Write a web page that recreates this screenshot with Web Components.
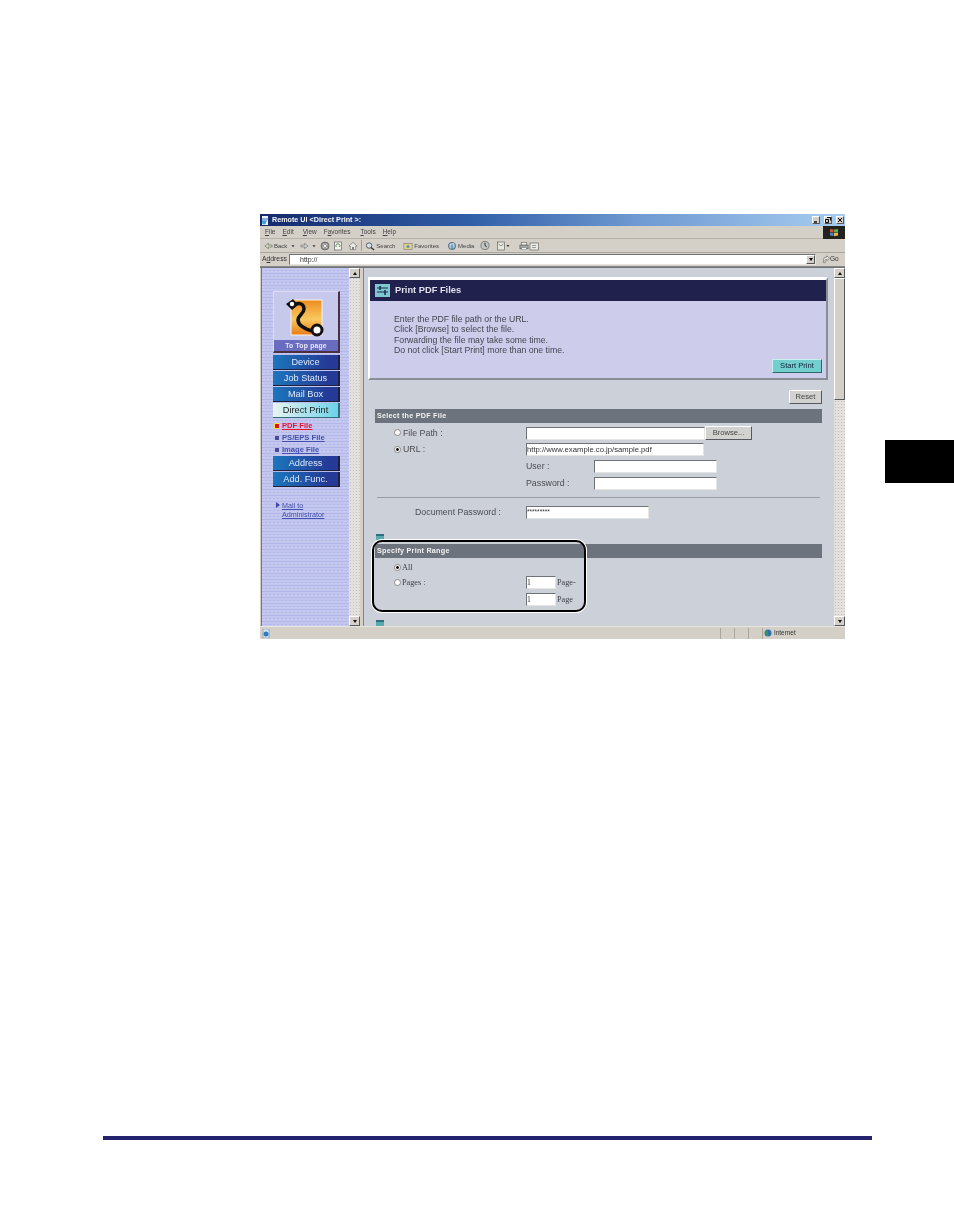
<!DOCTYPE html>
<html lang="en">
<head>
<meta charset="utf-8">
<title>Remote UI Direct Print</title>
<style>
  html, body { margin: 0; background: #fff; }
  body { font-family: "Liberation Sans", Arial, sans-serif; }
</style>
</head>
<body>
<doc-page>
  <ie-window>
    <nav-sidebar slot="side"></nav-sidebar>
    <print-panel slot="main"></print-panel>
  </ie-window>
</doc-page>

<script>
// plain win2k style box edges, used all over
const RAISED = 'border:1px solid;border-color:#fff #55585c #55585c #fff;';
const SUNKEN = 'border:1px solid;border-color:#6f7276 #e4e4e0 #e4e4e0 #6f7276;';

class DocPage extends HTMLElement {
    constructor() {
        super();
        this.attachShadow({ mode: 'open' });
        this.shadowRoot.innerHTML = `
            <style>
                :host { display: block; width: 954px; height: 1227px; overflow: hidden; background: #fff; }
                .top { display: flex; padding: 214px 0 0 260px; }
                .tab { width: 69px; height: 43px; margin: 226px 0 0 40px; background: #000; flex: none; }
                .rule { width: 769px; height: 4px; margin: 497px 0 0 103px; background: #24246e; }
            </style>
            <div class="top"><slot></slot><div class="tab"></div></div>
            <div class="rule"></div>
        `;
    }
}

class IeWindow extends HTMLElement {
    constructor() {
        super();
        this.attachShadow({ mode: 'open' });
        this.shadowRoot.innerHTML = `
            <style>
                :host { display: block; flex: none; width: 585px; height: 425px; background: #d4d0c8; color: #333;
                        font: 7px/1 "Liberation Sans", Arial, sans-serif; filter: blur(.45px); }
                svg { display: block; flex: none; }
                .title { height: 12px; display: flex; align-items: center; padding: 0 1px;
                         background: linear-gradient(90deg, #14296c 0%, #2f5da6 35%, #6f9ad2 65%, #a6cdf0 100%);
                         color: #f4f4fa; font-size: 7.2px; font-weight: bold; gap: 2px; }
                .title span { flex: 1; }
                .ctl { width: 8px; height: 8px; background: #d4d0c8; margin-left: 2px; ${RAISED} box-sizing: border-box; }
                .menu { height: 13px; display: flex; align-items: center; border-bottom: 1px solid #b5b2aa; box-sizing: border-box; }
                .menu .items { flex: 1; display: flex; padding-left: 5px; font-size: 6.5px; color: #444; }
                .flag { width: 22px; height: 13px; background: #24221f; display: flex; align-items: center; justify-content: center; }
                .tools { height: 14px; display: flex; align-items: center; padding-left: 4px; font-size: 6px; color: #444;
                         border-bottom: 1px solid #a9a69e; box-sizing: border-box; }
                .tools i { font-style: normal; display: flex; align-items: center; gap: 1px; }
                .sep { width: 1px; height: 11px; background: #a09d95; }
                .addr { height: 14px; display: flex; align-items: center; border-bottom: 1px solid #888; box-sizing: border-box; }
                .addr b { font-weight: normal; width: 29px; padding-left: 2px; box-sizing: border-box; font-size: 6.8px; }
                .url { width: 527px; height: 11px; background: #fff; ${SUNKEN} box-sizing: border-box; display: flex; align-items: center;
                       padding-left: 10px; justify-content: space-between; }
                .drop { width: 9px; height: 9px; background: #d4d0c8; ${RAISED} box-sizing: border-box; display: flex; align-items: center; justify-content: center; }
                .drop::after { content: ""; border: 2px solid transparent; border-top: 3px solid #000; border-bottom: 0; }
                .go { display: flex; align-items: center; gap: 0; margin-left: 6px; font-size: 6.5px; }
                .body { height: 359px; display: flex; padding-left: 1px; border-top: 1px solid #6f7276; box-sizing: border-box; }
                .sidewrap { width: 99px; flex: none; display: flex; border-left: 1px solid #777; box-sizing: border-box; }
                .gap { width: 3px; flex: none; background: #d4d0c8; border-right: 1px solid #808388; }
                .mainwrap { flex: 1; display: flex; min-width: 0; background: #ccd0d9; }
                .mainslot { flex: 1; min-width: 0; }
                .status { height: 13px; display: flex; align-items: center; border-top: 1px solid #e8e6e0; box-sizing: border-box; padding-left: 2px; }
                .status .fill { flex: 1; }
                .cell { width: 14px; height: 11px; border-left: 1px solid #a9a69e; box-sizing: border-box; }
                .zone { width: 83px; height: 11px; border-left: 1px solid #a9a69e; box-sizing: border-box; display: flex; align-items: center; gap: 2px; padding-left: 1px; font-size: 6.4px; }
            </style>
            <div class="title">
                <svg width="9" height="9" viewBox="0 0 9 9"><rect x="1" y="0" width="6" height="9" fill="#e8f2fb"/><path d="M1 3h6M1 5h5" stroke="#3a6fb0"/><circle cx="3" cy="6.5" r="2" fill="#3aa0d8"/></svg>
                <span>Remote UI &lt;Direct Print &gt;:</span>
                <div class="ctl"><svg width="6" height="6" viewBox="0 0 6 6"><path d="M1 5h3" stroke="#000" stroke-width="1.4"/></svg></div>
                <div class="ctl"><svg width="6" height="6" viewBox="0 0 6 6"><path d="M2 .5h3.5v3M.5 2.5h3v3h-3z" fill="none" stroke="#000"/></svg></div>
                <div class="ctl"><svg width="6" height="6" viewBox="0 0 6 6"><path d="M1 1l4 4M5 1L1 5" stroke="#000"/></svg></div>
            </div>
            <div class="menu">
                <div class="items">
                    <span style="margin-right:7px"><u>F</u>ile</span><span style="margin-right:9px"><u>E</u>dit</span><span style="margin-right:7px"><u>V</u>iew</span><span style="margin-right:10px">F<u>a</u>vorites</span><span style="margin-right:7px"><u>T</u>ools</span><span><u>H</u>elp</span>
                </div>
                <div class="flag"><svg width="10" height="9" viewBox="0 0 10 9"><path d="M1 1l3.5.6v3L1 4z" fill="#d8503c"/><path d="M5 1.6L9 1v3l-4 .6z" fill="#5cae4c"/><path d="M1 4.6l3.5.5v3L1 7.5z" fill="#4c82d0"/><path d="M5 5.1L9 4.6v3l-4 .6z" fill="#e2b93c"/></svg></div>
            </div>
            <div class="tools">
                <i><svg width="9" height="8" viewBox="0 0 10 8"><path d="M5 1L1 4l4 3V5h4V3H5z" fill="#d8dcc8" stroke="#5a6a5a" stroke-width=".7"/></svg>Back</i>
                <svg width="6" height="8" viewBox="0 0 8 8" style="margin:0 4px 0 3px"><path d="M2 3h4L4 5.5z" fill="#333"/></svg>
                <svg width="9" height="8" viewBox="0 0 10 8"><path d="M5 1l4 3-4 3V5H1V3h4z" fill="#c8ccc8" stroke="#777" stroke-width=".7"/></svg>
                <svg width="6" height="8" viewBox="0 0 8 8" style="margin:0 3px 0 2px"><path d="M2 3h4L4 5.5z" fill="#333"/></svg>
                <svg width="10" height="10" viewBox="0 0 10 10" style="margin-right:3px"><circle cx="5" cy="5" r="4" fill="#9a9a98" stroke="#555" stroke-width=".7"/><path d="M3.3 3.3l3.4 3.4M6.7 3.3L3.3 6.7" stroke="#eee"/></svg>
                <svg width="10" height="10" viewBox="0 0 10 10" style="margin-right:5px"><rect x="1.5" y="1" width="7" height="8" fill="#f2f2ee" stroke="#666" stroke-width=".7"/><path d="M3.3 6a2 2 0 1 1 3.2 0" fill="none" stroke="#4a8a50"/></svg>
                <svg width="10" height="10" viewBox="0 0 11 10"><path d="M1 5l4.5-4L10 5H8.5v4h-6V5z" fill="#ecece6" stroke="#666" stroke-width=".7"/><rect x="4.5" y="6" width="2" height="3" fill="#777"/></svg>
                <div class="sep" style="margin:0 3px 0 3px"></div>
                <i><svg width="10" height="10" viewBox="0 0 11 10"><circle cx="4.5" cy="4.5" r="3" fill="#cfe2ee" stroke="#555"/><path d="M6.6 6.6L10 9.5" stroke="#333" stroke-width="1.4"/></svg>Search</i>
                <i style="margin-left:8px"><svg width="10" height="10" viewBox="0 0 11 10"><rect x="1" y="2" width="9" height="7" fill="#e6d68c" stroke="#777" stroke-width=".7"/><path d="M5.5 3l.8 1.6 1.7.2-1.2 1.1.3 1.6-1.6-.8-1.6.8.3-1.6L3 4.8l1.7-.2z" fill="#5a86c0"/></svg>Favorites</i>
                <i style="margin-left:8px"><svg width="10" height="10" viewBox="0 0 11 10"><circle cx="5.5" cy="5" r="4" fill="#6f9cc0" stroke="#445"  stroke-width=".6"/><path d="M3.5 7.5V3l4-.6v4.4" fill="none" stroke="#fff" stroke-width=".8"/></svg>Media</i>
                <svg width="10" height="11" viewBox="0 0 11 11" style="margin-left:6px"><circle cx="5.5" cy="5.5" r="4.5" fill="#bfc4c2" stroke="#555" stroke-width=".7"/><path d="M5.5 2.5v3l2 1.5" fill="none" stroke="#222"/></svg>
                <svg width="17" height="10" viewBox="0 0 14 10" style="margin-left:5px"><rect x="1" y="1" width="7" height="8" fill="#e8e8e0" stroke="#666" stroke-width=".7"/><path d="M2 3l2.500 2L7 3" fill="none" stroke="#666" stroke-width=".7"/><path d="M10 4h3l-1.500 2z" fill="#333"/></svg>
                <svg width="10" height="10" viewBox="0 0 11 10" style="margin-left:7px"><rect x="2.500" y="1" width="6" height="3" fill="#f4f4f0" stroke="#666" stroke-width=".7"/><rect x="1" y="4" width="9" height="4" fill="#a8a8a4" stroke="#555" stroke-width=".7"/><rect x="3" y="7" width="5" height="2" fill="#fff" stroke="#666" stroke-width=".5"/></svg>
                <svg width="11" height="10" viewBox="0 0 11 10"><rect x="1" y="2" width="8.500" height="7" fill="#ecece4" stroke="#666" stroke-width=".7"/><path d="M3 4.500h4M3 6.500h4" stroke="#777" stroke-width=".7"/></svg>
            </div>
            <div class="addr">
                <b>A<u>d</u>dress</b>
                <div class="url"><span>http://</span><div class="drop"></div></div>
                <div class="go"><svg width="8" height="9" viewBox="0 0 10 10"><path d="M2 9V5a3 3 0 0 1 3-3h1V.500L9.500 3.500 6 6.500V5H5a1 1 0 0 0-1 1v3z" fill="#e6e6de" stroke="#555" stroke-width=".7"/></svg>Go</div>
            </div>
            <div class="body">
                <div class="sidewrap"><slot name="side"></slot><win-scrollbar></win-scrollbar></div>
                <div class="gap"></div>
                <div class="mainwrap"><div class="mainslot"><slot name="main"></slot></div><win-scrollbar thumb></win-scrollbar></div>
            </div>
            <div class="status">
                <svg width="9" height="9" viewBox="0 0 9 9"><rect x="1" y="0" width="6" height="9" fill="#d8e8f4" stroke="#5a7a9a" stroke-width=".5"/><circle cx="4" cy="5" r="2.500" fill="#2f7cc4"/></svg>
                <div class="fill"></div>
                <div class="cell"></div><div class="cell"></div><div class="cell"></div>
                <div class="zone"><svg width="8" height="8" viewBox="0 0 8 8"><circle cx="4" cy="4" r="3.500" fill="#2f6fb0"/><path d="M2 1.500l2 1-.5 2L5 6 3 7 1.500 4z" fill="#3f9a4c"/></svg>Internet</div>
            </div>
        `;
    }
}

class WinScrollbar extends HTMLElement {
    constructor() {
        super();
        this.attachShadow({ mode: 'open' });
        const thumb = this.hasAttribute('thumb') ? '<div class="thumb"></div>' : '';
        this.shadowRoot.innerHTML = `
            <style>
                :host { display: flex; flex-direction: column; width: 11px; flex: none; box-sizing: border-box;
                        background: #e2e1dc radial-gradient(#c2c0ba .5px, transparent .7px) 0 0 / 3px 3px; }
                .btn { width: 11px; height: 10px; box-sizing: border-box; background: #d4d0c8; ${RAISED} display: flex; align-items: center; justify-content: center; flex: none; }
                .btn::after { content: ""; border: 2.500px solid transparent; border-bottom: 3px solid #111; border-top: 0; }
                .down::after { border-top: 3px solid #111; border-bottom: 0; }
                .thumb { height: 122px; width: 11px; box-sizing: border-box; background: #d4d0c8; ${RAISED} flex: none; }
                .mid { flex: 1; }
            </style>
            <div class="btn"></div>${thumb}<div class="mid"></div><div class="btn down"></div>
        `;
    }
}

class NavButton extends HTMLElement {
    constructor() {
        super();
        this.attachShadow({ mode: 'open' });
        this.shadowRoot.innerHTML = `
            <style>
                :host { display: flex; align-items: center; justify-content: center; width: 67px; height: 15px; box-sizing: border-box; padding-top: 1px;
                        margin-bottom: 1px; color: #dfe8f8; font-size: 9.2px;
                        background: linear-gradient(90deg, #1c76bd, #243a96 85%);
                        border-right: 2px solid #20203a; border-bottom: 1px solid #20203a; }
                :host([active]) { color: #222; background: linear-gradient(90deg, #e8f4f2, #6dd2e8); border-color: #30707a; }
            </style>
            <slot></slot>
        `;
    }
}

class NavLink extends HTMLElement {
    constructor() {
        super();
        this.attachShadow({ mode: 'open' });
        this.shadowRoot.innerHTML = `
            <style>
                :host { display: flex; align-items: center; height: 12px; font-size: 7.6px; font-weight: bold; color: #4450ac; }
                .mark { width: 4px; height: 4px; background: #4a4a9c; margin: 0 3px 0 2px; flex: none; }
                u { text-decoration-thickness: 1px; }
                :host([current]) { color: #f0102c; }
                :host([current]) .mark { background: #d8102c; box-shadow: 0 0 0 1px #f4e04c; }
            </style>
            <span class="mark"></span><u><slot></slot></u>
        `;
    }
}

class NavSidebar extends HTMLElement {
    constructor() {
        super();
        this.attachShadow({ mode: 'open' });
        this.shadowRoot.innerHTML = `
            <style>
                :host { display: block; flex: 1; min-width: 0; height: 100%; box-sizing: border-box; padding: 23px 0 0 11px;
                        background: radial-gradient(rgba(212,214,244,.55) .5px, transparent .8px) 0 0 / 4px 6px,
                                    #bcc0ec repeating-linear-gradient(0deg, #c2c6f0 0 1px, #b2b8e8 1px 2px, #c4c6ee 2px 3px); }
                .logo { width: 67px; height: 62px; box-sizing: border-box; background: #c6c8ec; display: flex; flex-direction: column;
                        border: 1px solid #dcdcf4; border-right: 2px solid #4a3040; border-bottom: 2px solid #4a3040; margin-bottom: 2px; }
                .art { flex: 1; display: flex; align-items: center; padding-left: 10px; }
                .strip { height: 11px; background: #6a6cc0; color: #e8e8f8; font-size: 6.8px; font-weight: bold; text-align: center; line-height: 11px; letter-spacing: .2px; }
                .links { padding-top: 1px; }
                .mail { margin: 14px 0 0 3px; display: flex; gap: 2px; font-size: 7.2px; line-height: 9px; color: #4450ac; }
                .arrow { width: 0; height: 0; border: 3px solid transparent; border-left: 4px solid #3d4aa8; border-right: 0; margin-top: 1px; flex: none; }
                .mail u { display: block; }
            </style>
            <div class="logo">
                <div class="art">
                    <svg width="42" height="42" viewBox="0 0 42 42">
                        <defs><linearGradient id="o" x1="0" y1="0" x2="0" y2="1">
                            <stop offset="0" stop-color="#ef8a1c"/><stop offset=".25" stop-color="#f4a83c"/><stop offset=".55" stop-color="#f8c860"/><stop offset="1" stop-color="#ec7a14"/>
                        </linearGradient></defs>
                        <rect x="7" y="5" width="31" height="35" fill="url(#o)" stroke="#f6f4ec" stroke-width="1"/>
                        <path d="M9 10c7-3 11-1 11 4s-6 6-6 11 7 9 14 11" fill="none" stroke="#111" stroke-width="3.500" stroke-linecap="round"/>
                        <path d="M2 9l7-5 5 6-6 5z" fill="#111"/><circle cx="8" cy="9" r="2.200" fill="#fff"/>
                        <circle cx="33" cy="35" r="5" fill="#fff" stroke="#111" stroke-width="3"/>
                    </svg>
                </div>
                <div class="strip">To Top page</div>
            </div>
            <nav-button>Device</nav-button>
            <nav-button>Job Status</nav-button>
            <nav-button>Mail Box</nav-button>
            <nav-button active>Direct Print</nav-button>
            <div class="links">
                <nav-link current>PDF File</nav-link>
                <nav-link>PS/EPS File</nav-link>
                <nav-link>Image File</nav-link>
            </div>
            <nav-button>Address</nav-button>
            <nav-button>Add. Func.</nav-button>
            <div class="mail"><span class="arrow"></span><div><u>Mail to</u><u>Administrator</u></div></div>
        `;
    }
}

class WinButton extends HTMLElement {
    constructor() {
        super();
        this.attachShadow({ mode: 'open' });
        this.shadowRoot.innerHTML = `
            <style>
                :host { display: inline-flex; align-items: center; justify-content: center; box-sizing: border-box; height: 14px; flex: none;
                        background: #d2d2d0; color: #444; font-size: 7.6px; ${RAISED} }
                :host([accent]) { background: #72cfce; color: #123; border-color: #c8f0f0 #2c6a6a #2c6a6a #c8f0f0; }
            </style>
            <slot></slot>
        `;
    }
}

class TextBox extends HTMLElement {
    constructor() {
        super();
        this.attachShadow({ mode: 'open' });
        this.shadowRoot.innerHTML = `
            <style>
                :host { display: flex; align-items: center; box-sizing: border-box; height: 13px; flex: none; background: #fff;
                        color: #333; font-size: 7.700px; overflow: hidden; white-space: nowrap; ${SUNKEN} }
            </style>
            <slot></slot>
        `;
    }
}

class RadioOpt extends HTMLElement {
    constructor() {
        super();
        this.attachShadow({ mode: 'open' });
        this.shadowRoot.innerHTML = `
            <style>
                :host { display: flex; align-items: center; gap: 1px; padding-left: 19px; white-space: nowrap; }
                .dot { width: 7px; height: 7px; border-radius: 50%; background: #fff; border: 1px solid #888; box-sizing: border-box; flex: none; position: relative; }
                :host([checked]) .dot { background: radial-gradient(#111 0 1.300px, #fff 1.500px); }
            </style>
            <span class="dot"></span><slot></slot>
        `;
    }
}

class SectionBar extends HTMLElement {
    constructor() {
        super();
        this.attachShadow({ mode: 'open' });
        this.shadowRoot.innerHTML = `
            <style>
                :host { display: flex; align-items: center; height: 14px; background: #6c737c; color: #f2f2f2; font-size: 7.2px; font-weight: bold; padding-left: 2px; letter-spacing: .25px; }
            </style>
            <slot></slot>
        `;
    }
}

class AnchorMark extends HTMLElement {
    constructor() {
        super();
        this.attachShadow({ mode: 'open' });
        this.shadowRoot.innerHTML = `
            <style>
                :host { display: block; width: 8px; height: 6px; background: #5aa9ae; border-top: 2px solid #2e6f80; box-sizing: border-box; }
            </style>
        `;
    }
}

class PrintPanel extends HTMLElement {
    constructor() {
        super();
        this.attachShadow({ mode: 'open' });
        this.shadowRoot.innerHTML = `
            <style>
                :host { display: block; height: 100%; box-sizing: border-box; padding: 9px 12px 0 4px; position: relative; color: #4a4d52; font-size: 8.800px; }
                .card { height: 103px; box-sizing: border-box; background: #cdcdeb; display: flex; flex-direction: column;
                        border: 2px solid; border-top-width: 3px; border-color: #fff #8a8d96 #8a8d96 #fff; margin-right: -6px; }
                .head { height: 21px; background: #20224d; color: #e0e0ec; font-weight: bold; font-size: 9.300px; display: flex; align-items: center; gap: 5px; padding-left: 5px; }
                .text { flex: 1; padding: 13px 0 0 24px; line-height: 10.300px; color: #44444f; font-size: 8.700px; }
                .start { display: flex; justify-content: flex-end; margin: 0 4px 5px 0; }
                .start win-button { width: 50px; }
                .reset { display: flex; justify-content: flex-end; margin-top: 10px; margin-left: 7px; }
                .reset win-button { width: 33px; }
                .sec { margin: 5px 0 0 7px; }
                .form { margin-left: 7px; }
                .form radio-opt { gap: 2px; }
                .row { display: grid; grid-template-columns: 151px 1fr; align-items: center; height: 13px; margin-top: 4px; }
                .row.first { margin-top: 3px; }
                .cols { display: flex; align-items: center; }
                .lbl { width: 68px; flex: none; }
                hr { height: 1px; border: 0; background: #9a9ea6; margin: 7px 2px 8px 2px; }
                .docpw { padding-left: 40px; }
                .mark { margin: 15px 0 0 8px; }
                .serif { font: 8.200px "Liberation Serif", "Times New Roman", serif; color: #3e4146; }
                .rg { margin-left: 7px; }
                .rg .all { height: 11px; margin-top: 3px; display: flex; align-items: center; }
                .rg .pp { display: grid; grid-template-columns: 151px 1fr; margin-top: 4px; }
                .rg .page { display: flex; align-items: center; gap: 1px; height: 13px; margin-bottom: 4px; }
                .rg radio-opt { align-self: start; height: 13px; }
                .callout { position: absolute; left: 8px; top: 272px; width: 214px; height: 72px; box-sizing: border-box;
                           border: 2.200px solid #000; border-radius: 10px; box-shadow: 0 0 0 1px #fff; pointer-events: none; }
                .mark2 { margin: 10px 0 0 8px; }
                .pw { font-size: 6.500px; }
            </style>
            <div class="card">
                <div class="head">
                    <svg width="15" height="13" viewBox="0 0 15 13"><rect width="15" height="13" fill="#7ec9cf"/><path d="M2 4h11M2 8h11" stroke="#1c2a50"/><path d="M5 2v4M10 6v5" stroke="#1c2a50" stroke-width="1.500"/></svg>
                    <span>Print PDF Files</span>
                </div>
                <div class="text">
                    Enter the PDF file path or the URL.<br>
                    Click [Browse] to select the file.<br>
                    Forwarding the file may take some time.<br>
                    Do not click [Start Print] more than one time.
                </div>
                <div class="start"><win-button accent>Start Print</win-button></div>
            </div>
            <div class="reset"><win-button>Reset</win-button></div>
            <section-bar class="sec">Select the PDF File</section-bar>
            <div class="form">
                <div class="row first">
                    <radio-opt>File Path :</radio-opt>
                    <div class="cols"><text-box style="width:179px"></text-box><win-button style="width:47px">Browse...</win-button></div>
                </div>
                <div class="row">
                    <radio-opt checked>URL :</radio-opt>
                    <text-box style="width:178px">http://www.example.co.jp/sample.pdf</text-box>
                </div>
                <div class="row">
                    <span></span>
                    <div class="cols"><span class="lbl">User :</span><text-box style="width:123px"></text-box></div>
                </div>
                <div class="row">
                    <span></span>
                    <div class="cols"><span class="lbl">Password :</span><text-box style="width:123px"></text-box></div>
                </div>
                <hr>
                <div class="row" style="margin-top:0">
                    <span class="docpw">Document Password :</span>
                    <text-box style="width:123px"><span class="pw">*********</span></text-box>
                </div>
            </div>
            <anchor-mark class="mark"></anchor-mark>
            <section-bar class="sec" style="margin-top:4px">Specify Print Range</section-bar>
            <div class="rg serif">
                <div class="all"><radio-opt checked>All</radio-opt></div>
                <div class="pp">
                    <radio-opt>Pages :</radio-opt>
                    <div>
                        <div class="page"><text-box style="width:30px">1</text-box>Page-</div>
                        <div class="page"><text-box style="width:30px">1</text-box>Page</div>
                    </div>
                </div>
            </div>
            <anchor-mark class="mark2"></anchor-mark>
            <div class="callout"></div>
        `;
    }
}

customElements.define('doc-page', DocPage);
customElements.define('ie-window', IeWindow);
customElements.define('win-scrollbar', WinScrollbar);
customElements.define('nav-button', NavButton);
customElements.define('nav-link', NavLink);
customElements.define('nav-sidebar', NavSidebar);
customElements.define('win-button', WinButton);
customElements.define('text-box', TextBox);
customElements.define('radio-opt', RadioOpt);
customElements.define('section-bar', SectionBar);
customElements.define('anchor-mark', AnchorMark);
customElements.define('print-panel', PrintPanel);
</script>
</body>
</html>
